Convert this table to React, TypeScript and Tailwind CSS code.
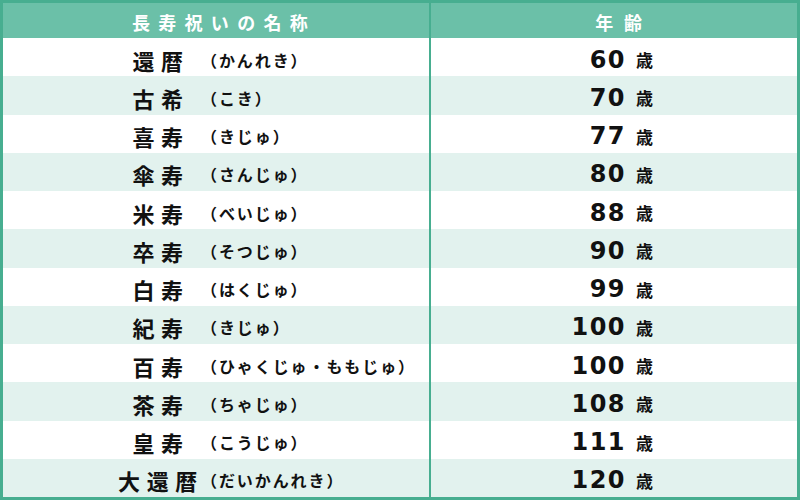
import React from "react";

const rows = [
  { name: "還暦", reading: "（かんれき）", age: "60" },
  { name: "古希", reading: "（こき）", age: "70" },
  { name: "喜寿", reading: "（きじゅ）", age: "77" },
  { name: "傘寿", reading: "（さんじゅ）", age: "80" },
  { name: "米寿", reading: "（べいじゅ）", age: "88" },
  { name: "卒寿", reading: "（そつじゅ）", age: "90" },
  { name: "白寿", reading: "（はくじゅ）", age: "99" },
  { name: "紀寿", reading: "（きじゅ）", age: "100" },
  { name: "百寿", reading: "（ひゃくじゅ・ももじゅ）", age: "100" },
  { name: "茶寿", reading: "（ちゃじゅ）", age: "108" },
  { name: "皇寿", reading: "（こうじゅ）", age: "111" },
  { name: "大還暦", reading: "（だいかんれき）", age: "120" },
];

const jp = {
  fontFamily: '"Noto Sans CJK JP", "Noto Sans", sans-serif',
};
const num = {
  fontFamily: '"DejaVu Sans", "Noto Sans", sans-serif',
};

export default function App() {
  return (
    <div
      className="w-[800px] h-[500px] bg-[#47ae90] p-[3px] text-[#111]"
      style={jp}
    >
      <div className="grid h-full grid-cols-[426px_366px] gap-x-[2px] grid-rows-[35px_repeat(12,1fr)] bg-[#47ae90]">
        <div className="flex items-center justify-center bg-[#6bc0a8] pl-[16px] pt-[2px] text-[18px] font-bold tracking-[0.46em] text-white leading-none">
          長寿祝いの名称
        </div>
        <div className="flex items-center justify-center bg-[#6bc0a8] pl-[20px] pt-[2px] text-[18px] font-bold tracking-[0.6em] text-white leading-none">
          年齢
        </div>
        {rows.map((row, i) => {
          const bg = i % 2 === 0 ? "bg-white" : "bg-[#e2f2ee]";
          return (
            <React.Fragment key={i}>
              <div className={`flex items-center pt-[5px] ${bg}`}>
                <span className="ml-[114px] w-[88px] text-center text-[22px] font-bold tracking-[0.3em] leading-none">
                  {row.name}
                </span>
                <span className="ml-[-4px] text-[16px] font-bold tracking-[0.12em] leading-none">
                  {row.reading}
                </span>
              </div>
              <div className={`flex items-center pt-[5px] ${bg}`}>
                <span
                  className="w-[195px] text-right text-[24px] font-bold tracking-[0.06em] leading-none"
                  style={num}
                >
                  {row.age}
                </span>
                <span className="ml-[10px] text-[17px] font-bold leading-none">
                  歳
                </span>
              </div>
            </React.Fragment>
          );
        })}
      </div>
    </div>
  );
}
